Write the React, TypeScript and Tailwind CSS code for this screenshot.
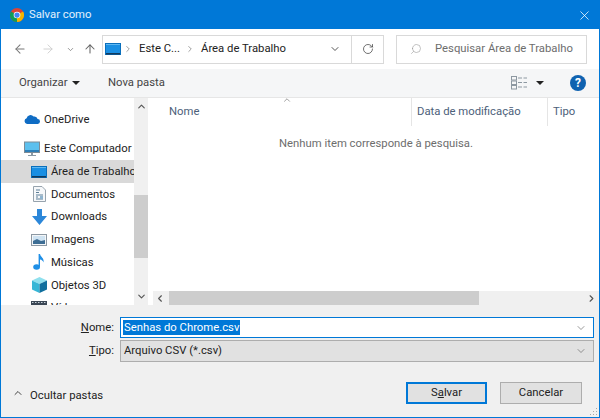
import type { ReactElement, ReactNode } from "react";
import { ArrowLeft, ArrowRight, ArrowUp, ChevronDown, ChevronLeft, ChevronRight, ChevronUp, RotateCw, Search, X } from "lucide-react";

// Small drawn icons for the Explorer tree
function ChromeIcon(): ReactElement {
  return (
    <svg width="14" height="14" viewBox="0 0 16 16" className="shrink-0">
      <circle cx="8" cy="8" r="8" fill="#db4437" />
      <path d="M8 8 L1.07 4 A8 8 0 0 0 8 16 Z" fill="#0f9d58" />
      <path d="M8 8 L8 16 A8 8 0 0 0 14.93 4 Z" fill="#f4b400" />
      <circle cx="8" cy="8" r="3.8" fill="#fff" />
      <circle cx="8" cy="8" r="3" fill="#4285f4" />
    </svg>
  );
}

function DesktopIcon({ w = 16 }: { w?: number }): ReactElement {
  return (
    <svg width={w} height={(w * 12) / 16} viewBox="0 0 16 12" className="shrink-0">
      <rect x="0.5" y="0.5" width="15" height="11" fill="#1a8fe3" stroke="#0a6fbc" />
      <rect x="1" y="1" width="14" height="1" fill="#5fb8f2" />
      <rect x="1" y="10" width="14" height="1.5" fill="#123a5c" />
    </svg>
  );
}

function CloudIcon(): ReactElement {
  return (
    <svg width="16" height="10" viewBox="0 0 16 10" className="shrink-0">
      <path d="M3 10 A3 3 0 0 1 2.6 4.2 A4 4 0 0 1 9.6 2.6 A3.4 3.4 0 0 1 13.6 5 A2.5 2.5 0 0 1 13.4 10 Z" fill="#0f6cc4" />
    </svg>
  );
}

function ComputerIcon(): ReactElement {
  return (
    <svg width="16" height="16" viewBox="0 0 16 16" className="shrink-0">
      <rect x="0.5" y="1" width="15" height="10.5" fill="#5cc0ee" stroke="#7d8b96" />
      <rect x="1" y="9" width="14" height="2" fill="#2d7fb8" />
      <rect x="7" y="12" width="2" height="2" fill="#8a98a3" />
      <rect x="4" y="14" width="8" height="1" fill="#8a98a3" />
    </svg>
  );
}

function DocumentIcon(): ReactElement {
  return (
    <svg width="13" height="16" viewBox="0 0 13 16" className="shrink-0">
      <path d="M0.5 0.5 H9 L12.5 4 V15.5 H0.5 Z" fill="#f6f8fa" stroke="#97a3ad" />
      <path d="M3 4 H7 M3 6.5 H6 M3 9 H10 M3 11 H5 M3 13 H10" stroke="#5d7f98" strokeWidth="1" />
      <rect x="7" y="10" width="3" height="3" fill="#8fb4cf" />
    </svg>
  );
}

function DownloadIcon(): ReactElement {
  return (
    <svg width="15" height="16" viewBox="0 0 15 16" className="shrink-0">
      <path d="M5 0 H10 V7 H15 L7.5 16 L0 7 H5 Z" fill="#2c87d9" />
    </svg>
  );
}

function PictureIcon(): ReactElement {
  return (
    <svg width="16" height="12" viewBox="0 0 16 12" className="shrink-0">
      <rect x="0.5" y="0.5" width="15" height="11" fill="#f4f6f8" stroke="#8c98a3" />
      <rect x="2" y="2" width="12" height="8" fill="#cfe3f2" />
      <path d="M2 7 L6 5 L10 7 L14 6 V10 H2 Z" fill="#3d6d94" />
    </svg>
  );
}

function MusicIcon(): ReactElement {
  return (
    <svg width="12" height="16" viewBox="0 0 12 16" className="shrink-0">
      <ellipse cx="3.6" cy="13" rx="3.4" ry="2.8" fill="#1f8fe6" />
      <path d="M5.6 13 V0 H7 C7.4 3 11.5 4 10.5 8.5 C10 6.5 8.6 5.6 7 5.4 V13 Z" fill="#1f8fe6" />
    </svg>
  );
}

function CubeIcon(): ReactElement {
  return (
    <svg width="15" height="16" viewBox="0 0 15 16" className="shrink-0">
      <path d="M7.5 0 L15 3.5 L7.5 7 L0 3.5 Z" fill="#8fe0ee" />
      <path d="M0 3.5 L7.5 7 V16 L0 12.5 Z" fill="#36b6d6" />
      <path d="M15 3.5 L7.5 7 V16 L15 12.5 Z" fill="#0f6f9e" />
    </svg>
  );
}

function VideoIcon(): ReactElement {
  return (
    <svg width="16" height="14" viewBox="0 0 16 14" className="shrink-0">
      <rect x="0" y="0" width="16" height="14" fill="#3a4654" />
      <path d="M1 1.5 H15 M1 12.5 H15" stroke="#c9d2da" strokeWidth="1" strokeDasharray="1.5 1.5" />
    </svg>
  );
}

function ViewsIcon(): ReactElement {
  return (
    <svg width="16" height="14" viewBox="0 0 16 14" className="shrink-0">
      <rect x="0.5" y="0.5" width="5" height="3.5" fill="none" stroke="#8d98a1" />
      <rect x="0.5" y="5" width="5" height="3.5" fill="none" stroke="#8d98a1" />
      <rect x="0.5" y="9.5" width="5" height="3.5" fill="none" stroke="#8d98a1" />
      <path d="M7 2 H11 M12.5 2 H16 M7 6.5 H11 M12.5 6.5 H16 M7 11 H11 M12.5 11 H16" stroke="#8d98a1" />
    </svg>
  );
}

function Caret(): ReactElement {
  return <span className="block w-0 h-0 border-x-[4px] border-x-transparent border-t-[4px] border-t-[#222]" />;
}

function TreeRow({ icon, label, active }: { icon: ReactNode; label: string; active?: boolean }): ReactElement {
  return (
    <div className={`flex items-center h-[22.7px] pl-[30px] shrink-0 whitespace-nowrap overflow-hidden ${active ? "bg-[#d9d9d9]" : ""}`}>
      <span className="w-[16px] flex justify-center shrink-0">{icon}</span>
      <span className="ml-[4px]">{label}</span>
    </div>
  );
}

export default function App(): ReactElement {
  return (
    <div className="w-[600px] h-[418px] flex flex-col overflow-hidden bg-white border border-[#0078d7] text-[11.3px] leading-none text-[#222] font-['Roboto','Noto_Sans',sans-serif]">
      {/* Title bar */}
      <div className="h-[28px] shrink-0 bg-[#0078d7] flex items-center pl-[9px] pr-[7px] text-white/90">
        <ChromeIcon />
        <span className="ml-[5px] flex-1">Salvar como</span>
        <X size={15} strokeWidth={1.2} className="text-white" />
      </div>

      {/* Address row */}
      <div className="h-[40px] shrink-0 flex items-center pl-[12px] pr-[12px] bg-white">
        <ArrowLeft size={14} strokeWidth={1.8} className="text-[#777]" />
        <ArrowRight size={14} strokeWidth={1.5} className="text-[#ccc] ml-[14px]" />
        <ChevronDown size={9} strokeWidth={2} className="text-[#777] ml-[11px]" />
        <ArrowUp size={14} strokeWidth={1.8} className="text-[#666] ml-[8px]" />
        <div className="ml-[5px] w-[282px] h-[29px] border border-[#d9d9d9] flex items-center">
          <div className="flex-1 flex items-center pl-[2px] min-w-0">
            <DesktopIcon />
            <ChevronRight size={10} strokeWidth={1.5} className="ml-[2px] text-[#666]" />
            <span className="ml-[6px] whitespace-nowrap">Este C...</span>
            <ChevronRight size={10} strokeWidth={1.5} className="ml-[5px] text-[#666]" />
            <span className="ml-[6px] whitespace-nowrap">Área de Trabalho</span>
          </div>
          <div className="w-[32px] h-full flex items-center justify-center">
            <ChevronDown size={12} strokeWidth={2} className="text-[#555]" />
          </div>
          <div className="w-[32px] h-full border-l border-[#d9d9d9] flex items-center justify-center">
            <RotateCw size={12} strokeWidth={1.5} className="text-[#444]" />
          </div>
        </div>
        <div className="ml-[12px] w-[191px] h-[29px] border border-[#d9d9d9] flex items-center pl-[13px] text-[#6d6d6d]">
          <Search size={12} strokeWidth={1.2} className="text-[#999] -scale-x-100" />
          <span className="ml-[13px] whitespace-nowrap">Pesquisar Área de Trabalho</span>
        </div>
      </div>

      {/* Toolbar */}
      <div className="h-[29px] shrink-0 bg-[#f5f6f7] border-b border-[#e6e6e6] flex items-center pl-[18px] pr-[13px] text-[#444]">
        <span className="w-[48px]">Organizar</span>
        <span className="ml-[5px]"><Caret /></span>
        <span className="ml-[28px] flex-1">Nova pasta</span>
        <ViewsIcon />
        <span className="ml-[9px] mr-[26px]"><Caret /></span>
        <span className="w-[16px] h-[16px] rounded-full bg-[#0f62b0] text-white font-bold flex items-center justify-center text-[12px]">?</span>
      </div>

      {/* Tree + file list */}
      <div className="h-[207px] shrink-0 flex">
        <div className="w-[133px] shrink-0 flex flex-col overflow-hidden pt-[10px]">
          <div className="flex items-center h-[22.7px] pl-[23px] shrink-0 whitespace-nowrap">
            <CloudIcon />
            <span className="ml-[4px]">OneDrive</span>
          </div>
          <div className="h-[7px] shrink-0" />
          <div className="flex items-center h-[22.7px] pl-[23px] shrink-0 whitespace-nowrap">
            <ComputerIcon />
            <span className="ml-[4px]">Este Computador</span>
          </div>
          <TreeRow active icon={<DesktopIcon />} label="Área de Trabalho" />
          <TreeRow icon={<DocumentIcon />} label="Documentos" />
          <TreeRow icon={<DownloadIcon />} label="Downloads" />
          <TreeRow icon={<PictureIcon />} label="Imagens" />
          <TreeRow icon={<MusicIcon />} label="Músicas" />
          <TreeRow icon={<CubeIcon />} label="Objetos 3D" />
          <TreeRow icon={<VideoIcon />} label="Vídeos" />
        </div>

        {/* Tree scrollbar */}
        <div className="w-[14px] shrink-0 bg-[#f0f0f0] flex flex-col items-center">
          <ChevronUp size={11} strokeWidth={2.5} className="text-[#555] mt-[3px] h-[11px]" />
          <div className="h-[83px] shrink-0" />
          <div className="w-full h-[63px] shrink-0 bg-[#cdcdcd]" />
          <div className="flex-1" />
          <ChevronDown size={11} strokeWidth={2.5} className="text-[#555] mb-[3px]" />
        </div>

        {/* File list */}
        <div className="flex-1 min-w-0 flex flex-col pl-[5px]">
          <div className="relative h-[28px] shrink-0 flex text-[#4c607a] -ml-[3px]">
            <ChevronUp size={10} strokeWidth={1.5} className="absolute left-[132px] -top-[3px] text-[#666]" />
            <div className="w-[261px] pl-[19px] pt-[8px]">Nome</div>
            <div className="w-[136px] pl-[5px] pt-[8px] border-l border-[#e5e5e5]">Data de modificação</div>
            <div className="flex-1 pl-[5px] pt-[8px] border-l border-[#e5e5e5]">Tipo</div>
          </div>
          <div className="flex-1 flex justify-center pt-[12px] text-[#6d6d6d]">Nenhum item corresponde à pesquisa.</div>
          <div className="h-[14px] shrink-0 bg-[#f0f0f0] flex items-center">
            <ChevronLeft size={11} strokeWidth={2.5} className="text-[#555] w-[14px]" />
            <div className="ml-[2px] w-[310px] h-full bg-[#cdcdcd]" />
            <div className="flex-1" />
            <ChevronRight size={11} strokeWidth={2.5} className="text-[#555] mr-[2px]" />
          </div>
        </div>
      </div>

      {/* Bottom form */}
      <div className="relative flex-1 bg-[#f0f0f0] flex flex-col pl-[10px] pr-[5px]">
        <div className="flex items-center mt-[12px] h-[21px]">
          <label className="w-[109px] text-right pr-[6px]"><span className="underline">N</span>ome:</label>
          <div className="flex-1 h-full bg-white border border-[#0078d7] flex items-center pl-[2px] pr-[6px]">
            <span className="flex-1"><span className="bg-[#0078d7] text-white px-[1px] py-[1px]">Senhas do Chrome.csv</span></span>
            <ChevronDown size={12} strokeWidth={1.2} className="text-[#555]" />
          </div>
        </div>
        <div className="flex items-center mt-[2px] h-[22px]">
          <label className="w-[109px] text-right pr-[6px]"><span className="underline">T</span>ipo:</label>
          <div className="flex-1 h-full bg-[#e1e1e1] border border-[#adadad] flex items-center pl-[3px] pr-[6px]">
            <span className="flex-1">Arquivo CSV (*.csv)</span>
            <ChevronDown size={12} strokeWidth={1.2} className="text-[#555]" />
          </div>
        </div>
        <div className="flex items-center mt-[20px] h-[22px]">
          <ChevronUp size={12} strokeWidth={2} className="text-[#444] ml-[1px]" />
          <span className="ml-[6px] flex-1 mt-[6px]">Ocultar pastas</span>
          <button className="w-[81px] h-full bg-[#e1e1e1] border-2 border-[#0078d7] text-[#222]">S<span className="underline">a</span>lvar</button>
          <button className="ml-[13px] mr-[12px] w-[82px] h-full bg-[#e1e1e1] border border-[#adadad] text-[#222]">Cancelar</button>
        </div>
        <svg width="10" height="10" viewBox="0 0 10 10" className="absolute right-[1px] bottom-[1px]">
          <path d="M8 2 h1 v1 h-1 Z M5 5 h1 v1 h-1 Z M8 5 h1 v1 h-1 Z M2 8 h1 v1 h-1 Z M5 8 h1 v1 h-1 Z M8 8 h1 v1 h-1 Z" fill="#a8a8a8" />
        </svg>
      </div>
    </div>
  );
}
